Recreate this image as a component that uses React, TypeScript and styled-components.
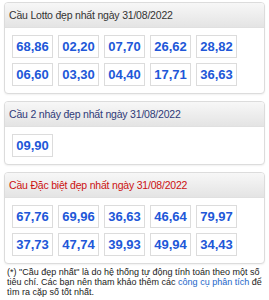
import React from 'react';
import styled, { createGlobalStyle } from 'styled-components';

const Global = createGlobalStyle`
  body {
    margin: 0;
    background: #fff;
    font-family: "Liberation Sans", Arial, sans-serif;
  }
`;

const Page = styled.div`
  width: 269px;
  padding: 2px 4px 0 4px;
  box-sizing: border-box;
  display: flex;
  flex-direction: column;
  gap: 7px;
`;

const Card = styled.div`
  border: 1px solid #dcdcdc;
  border-radius: 4px;
  background: #fff;
  box-shadow: 0 1px 2px rgba(0, 0, 0, 0.06);
  overflow: hidden;
`;

const Header = styled.div<{ $color: string }>`
  height: 24px;
  display: flex;
  align-items: center;
  padding: 0 4px;
  font-size: 10.5px;
  letter-spacing: -0.2px;
  color: ${(p) => p.$color};
  background: linear-gradient(#f7f7f7, #e4e4e4);
  border-bottom: 1px solid #e0e0e0;
`;

const Body = styled.div`
  padding: 7px;
  display: grid;
  grid-template-columns: repeat(5, 41px);
  gap: 5px;
`;

const NumBox = styled.div`
  height: 23px;
  box-sizing: border-box;
  border: 1px solid #dcdcdc;
  display: flex;
  align-items: center;
  justify-content: center;
  font-size: 13px;
  font-weight: bold;
  color: #2157d8;
`;

const Note = styled.p`
  margin: 3px 0 0 0;
  padding: 0 0 0 7px;
  font-size: 9px;
  line-height: 10px;
  white-space: nowrap;
  color: #222;
  a {
    color: #1a66c9;
    text-decoration: none;
  }
`;

const sections = [
  {
    title: 'Cầu Lotto đẹp nhất ngày 31/08/2022',
    color: '#333',
    nums: ['68,86', '02,20', '07,70', '26,62', '28,82', '06,60', '03,30', '04,40', '17,71', '36,63'],
  },
  {
    title: 'Cầu 2 nháy đẹp nhất ngày 31/08/2022',
    color: '#2e3a78',
    nums: ['09,90'],
  },
  {
    title: 'Cầu Đặc biệt đẹp nhất ngày 31/08/2022',
    color: '#cc1111',
    nums: ['67,76', '69,96', '36,63', '46,64', '79,97', '37,73', '47,74', '39,93', '49,94', '34,43'],
  },
];

export default function App() {
  return (
    <>
      <Global />
      <Page>
        {sections.map((s) => (
          <Card key={s.title}>
            <Header $color={s.color}>{s.title}</Header>
            <Body>
              {s.nums.map((n, i) => (
                <NumBox key={i}>{n}</NumBox>
              ))}
            </Body>
          </Card>
        ))}
      </Page>
      <Note>
        (*) "Cầu đẹp nhất" là do hệ thống tự động tính toán theo một số
        <br />
        tiêu chí. Các bạn nên tham khảo thêm các <a href="#">công cụ phân tích</a> để
        <br />
        tìm ra cặp số tốt nhất.
      </Note>
    </>
  );
}
